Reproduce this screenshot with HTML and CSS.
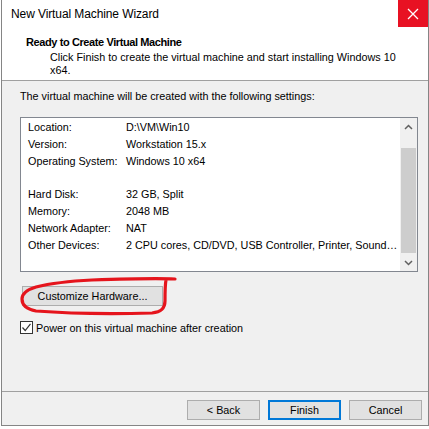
FILE: index.html
```html
<!DOCTYPE html>
<html>
<head>
<meta charset="utf-8">
<link rel="stylesheet" href="styles.css">
</head>
<body>
<div class="window">
  <div class="titlebar">
    <span class="title">New Virtual Machine Wizard</span>
    <div class="close">
      <svg width="12" height="12" viewBox="0 0 12 12"><path d="M1 1 L11 11 M11 1 L1 11" stroke="#fff" stroke-width="1.3" fill="none"/></svg>
    </div>
  </div>
  <div class="header">
    <div class="heading">Ready to Create Virtual Machine</div>
    <div class="desc">Click Finish to create the virtual machine and start installing Windows 10<br>x64.</div>
  </div>
  <div class="content">
    <div class="intro">The virtual machine will be created with the following settings:</div>
    <div class="listbox">
      <div class="list">
        <div class="row"><span class="key">Location:</span><span class="val">D:\VM\Win10</span></div>
        <div class="row"><span class="key">Version:</span><span class="val">Workstation 15.x</span></div>
        <div class="row"><span class="key">Operating System:</span><span class="val">Windows 10 x64</span></div>
        <div class="row"><span class="key">&nbsp;</span></div>
        <div class="row"><span class="key">Hard Disk:</span><span class="val">32 GB, Split</span></div>
        <div class="row"><span class="key">Memory:</span><span class="val">2048 MB</span></div>
        <div class="row"><span class="key">Network Adapter:</span><span class="val">NAT</span></div>
        <div class="row"><span class="key">Other Devices:</span><span class="val">2 CPU cores, CD/DVD, USB Controller, Printer, Sound…</span></div>
      </div>
      <div class="scrollbar">
        <div class="sb-btn"><svg width="9" height="6" viewBox="0 0 9 6"><path d="M1 5 L4.5 1.5 L8 5" stroke="#606060" stroke-width="1.5" fill="none"/></svg></div>
        <div class="sb-track"><div class="thumb"></div></div>
        <div class="sb-btn"><svg width="9" height="6" viewBox="0 0 9 6"><path d="M1 1 L4.5 4.5 L8 1" stroke="#606060" stroke-width="1.5" fill="none"/></svg></div>
      </div>
    </div>
    <div class="custom-wrap">
      <button class="btn custom">Customize Hardware...</button>
      <svg class="scribble" width="170" height="44" viewBox="0 0 170 44">
        <path d="M163 4 C140 3 110 4 80 5 C60 6 40 8 24 12 C14 15 10 19 10 24 C10 30 14 34 24 36 C50 38 100 39 140 38 C150 37 153 33 153 26 C153 18 153 10 154 5" stroke="#e5141c" stroke-width="3.2" fill="none" stroke-linecap="round" stroke-linejoin="round"/>
      </svg>
    </div>
    <label class="check">
      <span class="box"><svg width="11" height="11" viewBox="0 0 11 11"><path d="M1.5 5.5 L4.2 8.5 L9.5 1.8" stroke="#333" stroke-width="1.2" fill="none"/></svg></span>
      <span>Power on this virtual machine after creation</span>
    </label>
  </div>
  <div class="footer">
    <button class="btn">&lt; Back</button>
    <button class="btn default">Finish</button>
    <button class="btn">Cancel</button>
  </div>
</div>
</body>
</html>
```

FILE: styles.css
```css
* { box-sizing: border-box; }
html, body { margin: 0; padding: 0; background: #ffffff; }
body {
  font-family: "Liberation Sans", Arial, sans-serif;
  font-size: 10.8px;
  color: #000;
}
.window {
  margin-left: 1px;
  width: 428px;
  height: 426px;
  border: 1px solid #858585;
  border-top: none;
  display: flex;
  flex-direction: column;
  background: #f0f0f0;
}
.titlebar {
  height: 27px;
  background: #fff;
  display: flex;
  align-items: center;
  justify-content: space-between;
  padding-left: 9px;
}
.title { font-size: 12px; color: #000; letter-spacing: -0.1px; }
.close {
  width: 30px;
  height: 27px;
  background: #e81123;
  display: flex;
  align-items: center;
  justify-content: center;
}
.close svg { display: block; }
.header {
  height: 54px;
  background: #fff;
  border-bottom: 1px solid #a0a0a0;
  padding: 8px 0 0 24px;
}
.heading { font-weight: bold; font-size: 11px; line-height: 14px; letter-spacing: -0.4px; }
.desc { margin: 2px 0 0 24px; line-height: 13px; white-space: nowrap; }
.content {
  flex: 1;
  padding: 9px 0 0 18px;
}
.intro { line-height: 13px; }
.listbox {
  margin-top: 14px;
  width: 398px;
  height: 155px;
  border: 1px solid #828790;
  background: #fff;
  display: flex;
}
.list { flex: 1; padding: 1px 0 0 7px; }
.row { display: flex; line-height: 16.8px; white-space: nowrap; }
.key { width: 98px; flex: none; }
.scrollbar {
  width: 17px;
  background: #f0f0f0;
  display: flex;
  flex-direction: column;
}
.sb-btn {
  height: 17px;
  display: flex;
  align-items: center;
  justify-content: center;
}
.sb-btn svg { display: block; }
.sb-track { flex: 1; padding-top: 13px; padding-bottom: 1px; display: flex; }
.thumb { flex: 1; margin: 0 1px; background: #cdcdcd; }
.custom-wrap { position: relative; margin-top: 14px; height: 20px; }
.btn {
  font: inherit;
  color: #000;
  height: 20px;
  background: #e1e1e1;
  border: 1px solid #adadad;
  padding: 0;
  margin: 0;
}
.custom { margin-left: 2px; width: 141px; }
.scribble { position: absolute; left: -8px; top: -11px; pointer-events: none; }
.check {
  margin-top: 15px;
  display: flex;
  align-items: center;
  height: 13px;
}
.box {
  width: 13px;
  height: 13px;
  border: 1px solid #333;
  background: #fff;
  display: flex;
  align-items: center;
  justify-content: center;
  margin-right: 3px;
}
.box svg { display: block; }
.footer {
  height: 34px;
  border-top: 1px solid #a0a0a0;
  display: flex;
  justify-content: flex-end;
  gap: 8px;
  padding: 8px 6px 0 0;
}
.footer .btn { width: 73px; }
.footer .default { border: 2px solid #0078d7; }
```
